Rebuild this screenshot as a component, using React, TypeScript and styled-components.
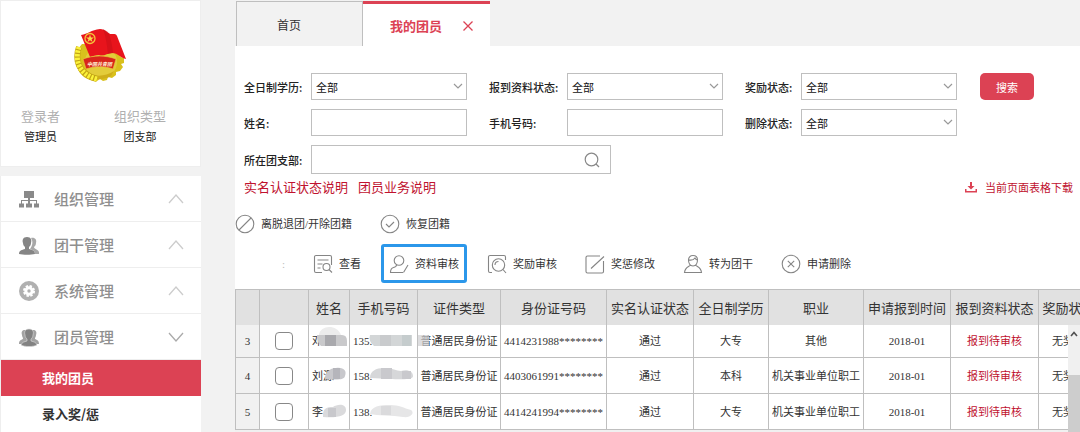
import React from "react";
import styled, { createGlobalStyle, css } from "styled-components";

const RED = "#dc4254";
const CRIMSON = "#c0122f";
const LINE = "#bfbfbf";

const GlobalStyle = createGlobalStyle`
  * { box-sizing: border-box; }
  body {
    margin: 0;
    background: #f2f2f2;
    color: #333;
    font: 11px/16px "Noto Sans CJK SC", sans-serif;
  }
  button, input, select { font: inherit; color: inherit; }
  a { color: inherit; text-decoration: none; }
  svg { display: block; flex: none; }
`;

const Page = styled.div`
  display: flex;
  gap: 34px;
  height: 100vh;
  overflow: hidden;
`;

/* Sidebar */
const Sidebar = styled.aside`
  flex: none;
  width: 201px;
  display: flex;
  flex-direction: column;
  gap: 9px;
`;

const Profile = styled.section`
  display: flex;
  flex-direction: column;
  align-items: center;
  height: 167px;
  padding-top: 27px;
  background: #fff;
  border: 1px solid #eee;
`;

const ProfileFacts = styled.dl`
  display: flex;
  align-self: stretch;
  justify-content: space-between;
  margin: 22px 0 0;
  padding: 0 34px 0 20px;
  text-align: center;
`;

const FactName = styled.dt`
  color: #b0b0b0;
  font-size: 13px;
  line-height: 20px;
`;

const FactValue = styled.dd`
  margin: 0;
  line-height: 20px;
  color: #222;
`;

const Menu = styled.nav`
  background: #fff;
  border-left: 1px solid #eee;
`;

const MenuGroup = styled.button`
  display: flex;
  align-items: center;
  width: 100%;
  height: 46px;
  padding: 0 17px 0 18px;
  border: 0;
  border-bottom: 1px solid #eee;
  background: none;
  color: #8f8f8f;
  font-size: 15px;
  font-weight: 500;
  line-height: 22px;
  text-align: left;
`;

const MenuTitle = styled.span`
  flex: 1;
  padding-left: 15px;
`;

const MenuLink = styled.a<{ $active?: boolean }>`
  display: flex;
  align-items: center;
  height: 36px;
  padding-left: 41px;
  font-size: 13px;
  font-weight: 700;
  color: ${(p) => (p.$active ? "#fff" : "#333")};
  background: ${(p) => (p.$active ? RED : "#fff")};
`;

/* Main column */
const Main = styled.main`
  flex: 1;
  min-width: 0;
  display: flex;
  flex-direction: column;
  background: #fff;
`;

const Tabs = styled.div`
  display: flex;
  height: 46px;
  padding: 1px 0 0 1px;
  background: #f2f2f2;
`;

const Tab = styled.div<{ $active?: boolean }>`
  display: flex;
  align-items: center;
  width: 127px;
  padding: 2px 0 0 40px;
  border: 1px solid ${LINE};
  border-bottom: 0;
  ${(p) =>
    p.$active &&
    css`
      border: 0;
      border-top: 3px solid ${RED};
      background: #fff;
      justify-content: space-between;
      padding: 2px 16px 0 27px;
    `}
`;

const TabButton = styled.button<{ $active?: boolean }>`
  padding: 0;
  border: 0;
  background: none;
  line-height: 20px;
  font-size: ${(p) => (p.$active ? 13 : 12)}px;
  font-weight: ${(p) => (p.$active ? 700 : 400)};
  color: ${(p) => (p.$active ? RED : "#333")};
`;

const IconButton = styled.button`
  display: flex;
  padding: 0;
  border: 0;
  background: none;
`;

const Filters = styled.form`
  display: grid;
  grid-template-columns: 67px 156px 100px 156px 78px 156px 77px;
  row-gap: 9px;
  align-items: center;
  padding: 27px 0 0 9px;
`;

const Label = styled.label`
  font-weight: 500;
  color: #222;
  white-space: nowrap;
`;

const SpacedLabel = styled(Label)`
  padding-left: 22px;
`;

const fieldBox = css`
  width: 100%;
  height: 27px;
  padding: 0 5px;
  border: 1px solid ${LINE};
  border-radius: 0;
  background: #fff;
  color: #111;
`;

const TextField = styled.input`
  ${fieldBox}
`;

const SelectWrap = styled.div`
  position: relative;
  > svg {
    position: absolute;
    right: 4px;
    top: 10px;
    pointer-events: none;
  }
`;

const SelectField = styled.select`
  ${fieldBox}
  appearance: none;
  display: block;
  padding: 0 4px;
`;

const SearchButton = styled.button`
  height: 27px;
  margin-left: 23px;
  border: 0;
  border-radius: 5px;
  background: ${RED};
  color: #fff;
`;

const BranchBox = styled.div`
  grid-column: 2 / span 3;
  display: flex;
  align-items: center;
  width: 300px;
  height: 29px;
  padding-right: 10px;
  border: 1px solid ${LINE};
`;

const BranchInput = styled.input`
  flex: 1;
  min-width: 0;
  height: 100%;
  border: 0;
`;

const LinkRow = styled.div`
  display: flex;
  align-items: center;
  gap: 10px;
  height: 26px;
  padding: 0 7px 0 9px;
  color: ${CRIMSON};
`;

const HelpLink = styled.a`
  font-size: 13px;
  line-height: 20px;
`;

const DownloadLink = styled.a`
  display: flex;
  align-items: center;
  gap: 8px;
  margin-left: auto;
`;

const Toolbar = styled.div`
  display: flex;
  align-items: center;
  gap: 28px;
  height: 40px;
  margin-top: 4px;
  font-family: "Liberation Serif", "Noto Sans CJK SC", serif;
`;

const ActionBar = styled(Toolbar)`
  height: 39px;
  margin: 0 0 6px;
`;

const Colon = styled.span`
  width: 50px;
  text-align: right;
  color: #bbb;
`;

const Action = styled.button<{ $focused?: boolean }>`
  display: flex;
  align-items: center;
  gap: 6px;
  height: 100%;
  padding: 0;
  border: 0;
  background: none;
  white-space: nowrap;
  ${(p) =>
    p.$focused &&
    css`
      margin: 0 -8px;
      padding: 0 5px;
      border: 3px solid #2b97ea;
      border-radius: 3px;
    `}
`;

/* Table */
const TableArea = styled.div`
  position: relative;
  flex: 1;
  min-height: 0;
  overflow: hidden;
  background: #f0f0f0;
`;

const Table = styled.table`
  table-layout: fixed;
  width: 864px;
  border-collapse: separate;
  border-spacing: 0;
  border-left: 1px solid ${LINE};
`;

const Th = styled.th`
  height: 36px;
  padding: 0;
  border: 1px solid ${LINE};
  border-width: 1px 1px 0 0;
  background: #e1e1e1;
  font-size: 13px;
  font-weight: 400;
  white-space: nowrap;
`;

const Tr = styled.tr<{ $first: boolean }>`
  height: ${(p) => (p.$first ? 33 : 36)}px;
`;

const Td = styled.td<{ $left?: boolean; $tone?: string }>`
  position: relative;
  padding: 0 ${(p) => (p.$left ? 3 : 0)}px;
  border: 1px solid ${LINE};
  border-width: 0 1px 1px 0;
  background: #fff;
  color: ${(p) => p.$tone || "#333"};
  font-family: "Liberation Serif", "Noto Sans CJK SC", serif;
  text-align: ${(p) => (p.$left ? "left" : "center")};
  white-space: nowrap;
`;

const IndexTd = styled(Td)`
  background: #f1f1f1;
`;

const RowCheck = styled.input`
  appearance: none;
  display: block;
  width: 18px;
  height: 18px;
  margin: 0 auto;
  border: 1px solid #888;
  border-radius: 4px;
  background: #fff;
`;

const Mask = styled.svg`
  position: absolute;
  left: 0;
  top: 0;
  z-index: 1;
  overflow: visible;
`;

const ScrollTrack = styled.div`
  position: absolute;
  z-index: 2;
  right: 0;
  top: 36px;
  bottom: 0;
  width: 12px;
  padding-top: 6px;
  display: flex;
  flex-direction: column;
  align-items: center;
  gap: 38px;
  background: #f0f0f0;
`;

const ScrollThumb = styled.div`
  flex: 1;
  width: 12px;
  background: #cdcdcd;
`;

const Chevron = ({ down = false }: { down?: boolean }) => (
  <svg width="16" height="10" viewBox="0 0 16 10" fill="none" stroke={down ? "#aaa" : "#ccc"} strokeWidth="1.3">
    <path d={down ? "M1 1l7 8 7-8" : "M1 9l7-8 7 8"} />
  </svg>
);

const Emblem = () => (
  <svg width="54" height="56" viewBox="0 0 54 56" role="img" aria-label="团徽">
    <path
      d="M8 16C2 22 0 31 3 39c3 9 11 14 20 14l3-2 3 2 4-1 1-3 4 1 4-3v-3l4-1 3-4-2-3 3-1V30l-3-1-5-12z"
      fill="#d9c01c"
    />
    <circle cx="27" cy="34" r="16" fill="#e3cc3a" />
    <path d="M13 44c7 5 18 5 27-1l-3 5c-7 4-15 4-21 1z" fill="#cfae1a" />
    <path d="M5 19C1 30 3 46 23 51" fill="none" stroke="#c2a314" strokeWidth="6" />
    <path d="M5 19C1 30 3 46 23 51" fill="none" stroke="#fbf23a" strokeWidth="5" strokeDasharray="2.400 1.200" />
    <path d="M7 7c7-1 10-5 19-6 6 0 8 6 13 5 2 0 3 0 4 2l9 23c-5-1-8-6-14-6-5 0-8 4-13 2-3 0-6 1-9 2z" fill="#e8141c" />
    <path d="M29 1c3 8 4 16 5 25l5-1C38 17 37 10 34 4z" fill="#c50d16" opacity=".5" />
    <path d="M9 31c11-4 22-4 33 0l-3 10c-8-3-18-3-27 0z" fill="#d8261c" stroke="#e9cf3f" strokeWidth=".6" />
    <text
      x="25.500"
      y="37.500"
      textAnchor="middle"
      fontSize="5"
      fontWeight="700"
      fontStyle="italic"
      fill="#fff3d8"
      fontFamily="Noto Sans CJK SC, sans-serif"
    >
      中国共青团
    </text>
    <circle cx="16" cy="10.500" r="5" fill="none" stroke="#f5c53a" strokeWidth="1.300" />
    <path d="M16 6.500l1 2.900h3l-2.400 1.800.9 2.900-2.500-1.800-2.500 1.800.9-2.900-2.400-1.800h3z" fill="#f8d64a" />
  </svg>
);

const OrgIcon = () => (
  <svg width="20" height="20" viewBox="0 0 20 20" fill="#8a8a8a">
    <path d="M5 2h10v7h-4v2h7v4h-1v-3h-6v3H9v-3H3v3H2v-4h7V9H5z" />
    <path d="M0 14.500h5v4H0zM7 14.500h6v4H7zM15 14.500h5v4h-5z" />
  </svg>
);

const PairIcon = () => (
  <svg width="20" height="20" viewBox="0 0 20 20">
    <path d="M12 3c4-1 6 2 5 5 0 2-1 3-2 4 0 2 4 2 5 5v2h-4c0-4-3-4-5-5 3-4 3-8 1-11z" fill="#a8a8a8" />
    <path d="M8 2c4 0 5 3 4 6 0 2-1 3-2 4v2c3 1 6 1 6 5-4 1-12 1-16 0 0-4 3-4 6-5v-2C5 11 4 10 4 8 3 5 4 2 8 2z" fill="#858585" />
  </svg>
);

const GearIcon = () => (
  <svg width="20" height="20" viewBox="0 0 20 20">
    <circle cx="10" cy="10" r="10" fill="#b0b0b0" />
    <circle cx="10" cy="10" r="5" fill="none" stroke="#fff" strokeWidth="2" strokeDasharray="2.400 1.527" />
    <circle cx="10" cy="10" r="3.200" fill="none" stroke="#fff" strokeWidth="3" />
  </svg>
);

const TrioIcon = () => (
  <svg width="20" height="20" viewBox="0 0 20 20">
    <path
      d="M6 3c-3 0-4 2-3 5 0 2 1 2 1 4-2 1-4 1-4 5h20c0-4-2-4-4-5 0-2 1-2 1-4 1-3 0-5-3-5z"
      fill="#a2a2a2"
    />
    <path
      d="M10 2c4 0 5 3 4 6 0 2-1 3-2 4v2c3 1 5 1 6 4-4 2-12 2-16 0 1-3 3-3 6-4v-2c-1-1-2-2-2-4-1-3 0-6 4-6z"
      fill="#828282"
      stroke="#ddd"
      strokeWidth=".6"
    />
  </svg>
);

const Glyph = ({ children }: { children: React.ReactNode }) => (
  <svg width="20" height="20" viewBox="0 0 20 20" fill="none" stroke="#858585" strokeWidth="1.100">
    {children}
  </svg>
);

const glyphs = {
  ban: (
    <>
      <circle cx="10" cy="10" r="8.800" />
      <path d="M4 16L16 4" />
    </>
  ),
  check: (
    <>
      <circle cx="10" cy="10" r="8.800" />
      <path d="M6 10l3 3 5-5" />
    </>
  ),
  view: (
    <>
      <path d="M9 18.500H3A1.500 1.500 0 0 1 1.500 17V3A1.500 1.500 0 0 1 3 1.500h14A1.500 1.500 0 0 1 18.500 3v8M4.500 6h11M4.500 10h5M4.500 14h3" />
      <circle cx="13.500" cy="13" r="3.500" />
      <path d="M16 15.500l3 3" />
    </>
  ),
  review: (
    <>
      <circle cx="10" cy="6.500" r="4.800" />
      <path d="M7.500 11c0 1.500-1 2-3 2.500-2 .5-3 2-3 5H14M19 11l-4.500 7.500" />
    </>
  ),
  award: (
    <>
      <path d="M5 18.500H3A1.500 1.500 0 0 1 1.500 17V3A1.500 1.500 0 0 1 3 1.500h14A1.500 1.500 0 0 1 18.500 3v3" />
      <circle cx="11.500" cy="11" r="6.200" />
      <path d="M8 11a3.500 3.500 0 0 1 3.500-3.500M16 15.500l3 3.500" />
    </>
  ),
  edit: <path d="M15 2H2.500A1.500 1.500 0 0 0 1 3.500v14A1.500 1.500 0 0 0 2.500 19H17a1.500 1.500 0 0 0 1.500-1.500V7M6 14.500L19 2.500" />,
  person: (
    <>
      <path d="M10 1.500c3 0 4.500 2 4.500 4.500 0 3-1.500 6-4.500 6S5.500 9 5.500 6c0-2.500 1.500-4.500 4.500-4.500zM6 6c3 .5 5-.5 6-2 .5 1 1.500 2 2.500 2M7.500 11C6 13 2 13 1.500 18.500h17C18 13 14 13 12.500 11" />
    </>
  ),
  remove: (
    <>
      <circle cx="10" cy="10" r="8.800" />
      <path d="M6.800 6.800l6.400 6.400M13.200 6.800l-6.400 6.400" />
    </>
  ),
};

type GlyphName = keyof typeof glyphs;

const ActionItem = ({ icon, text, focused }: { icon: GlyphName; text: string; focused?: boolean }) => (
  <Action type="button" $focused={focused}>
    <Glyph>{glyphs[icon]}</Glyph>
    {text}
  </Action>
);

const Dropdown = ({ id }: { id: string }) => (
  <SelectWrap>
    <SelectField id={id} defaultValue="all">
      <option value="all">全部</option>
    </SelectField>
    <svg width="10" height="7" viewBox="0 0 10 7" fill="none" stroke="#999" strokeWidth="1.200">
      <path d="M1 1l4 4 4-4" />
    </svg>
  </SelectWrap>
);

const menu = [
  { title: "组织管理", icon: <OrgIcon /> },
  { title: "团干管理", icon: <PairIcon /> },
  { title: "系统管理", icon: <GearIcon /> },
  { title: "团员管理", icon: <TrioIcon />, open: true },
];

const columns = [
  { title: "", width: 24 },
  { title: "", width: 49 },
  { title: "姓名", width: 41 },
  { title: "手机号码", width: 68 },
  { title: "证件类型", width: 83 },
  { title: "身份证号码", width: 106 },
  { title: "实名认证状态", width: 87 },
  { title: "全日制学历", width: 75 },
  { title: "职业", width: 95 },
  { title: "申请报到时间", width: 87 },
  { title: "报到资料状态", width: 88 },
  { title: "奖励状态", width: 60 },
];

const members = [
  {
    no: 3,
    name: "邓",
    phone: "135.",
    idNo: "4414231988********",
    degree: "大专",
    job: "其他",
    nameMask: (
      <>
        <path d="M10 10c1-10 18-11 22 0v4H10z" fill="#ececec" />
        <path d="M8 10h25q5 0 5 6v5H12q-4-3-4-11z" fill="#c9c9cb" />
        <path d="M16 10h11v11H16z" fill="#a9a9ad" />
      </>
    ),
    phoneMask: (
      <>
        <path d="M20 10h42v11H24q-6-5-4-11z" fill="#d3d6d7" />
        <path d="M30 10h11v11H30z" fill="#c9cbcd" />
        <path d="M52 10h9v11h-9z" fill="#c5cccd" />
        <path d="M68 10h11v11H68z" fill="#cfcfd1" opacity=".7" />
      </>
    ),
  },
  {
    no: 4,
    name: "刘源",
    phone: "158.",
    idNo: "4403061991********",
    degree: "本科",
    job: "机关事业单位职工",
    nameMask: (
      <>
        <path d="M16 21c0-7 5-11 11-11 8-1 11 3 9 8-1 4-7 4-20 3z" fill="#c8c8cc" />
        <path d="M24 10h7v11h-7z" fill="#b5b5bb" />
      </>
    ),
    phoneMask: (
      <>
        <path d="M20 20c0-7 6-10 14-10 9 0 12 3 17 3 6-2 12 0 12 5 0 4-8 4-43 2z" fill="#d6d7d9" />
        <path d="M31 10h11v11H31zM52 13h9v8h-9z" fill="#c9c9cd" />
      </>
    ),
  },
  {
    no: 5,
    name: "李",
    phone: "138.",
    idNo: "4414241994********",
    degree: "大专",
    job: "机关事业单位职工",
    nameMask: (
      <>
        <path d="M14 21c0-7 4-8 10-8 4-3 13-4 13 3 0 6-8 8-23 7z" fill="#dadadc" />
        <path d="M19 14h8v9h-8z" fill="#c8c8cc" />
      </>
    ),
    phoneMask: (
      <>
        <path d="M20 20c1-8 10-9 20-9 9 0 14 3 21 5 4 3 0 8-8 7-10-2-26-1-33-3z" fill="#e6e6e7" />
        <path d="M31 12h10v9H31z" fill="#dadadc" />
      </>
    ),
  },
];

export default function App() {
  return (
    <>
      <GlobalStyle />
      <Page>
        <Sidebar>
          <Profile>
            <Emblem />
            <ProfileFacts>
              <div>
                <FactName>登录者</FactName>
                <FactValue>管理员</FactValue>
              </div>
              <div>
                <FactName>组织类型</FactName>
                <FactValue>团支部</FactValue>
              </div>
            </ProfileFacts>
          </Profile>
          <Menu>
            {menu.map((m) => (
              <MenuGroup key={m.title} type="button" aria-expanded={!!m.open}>
                {m.icon}
                <MenuTitle>{m.title}</MenuTitle>
                <Chevron down={m.open} />
              </MenuGroup>
            ))}
            <MenuLink href="#members" $active>
              我的团员
            </MenuLink>
            <MenuLink href="#awards">录入奖/惩</MenuLink>
          </Menu>
        </Sidebar>

        <Main>
          <Tabs>
            <Tab>
              <TabButton type="button">首页</TabButton>
            </Tab>
            <Tab $active>
              <TabButton type="button" $active>
                我的团员
              </TabButton>
              <IconButton type="button" aria-label="关闭">
                <svg width="12" height="12" viewBox="0 0 12 12" stroke={RED} strokeWidth="1.300">
                  <path d="M1.500 1.500l9 9M10.500 1.500l-9 9" />
                </svg>
              </IconButton>
            </Tab>
          </Tabs>

          <Filters>
            <Label htmlFor="degree">全日制学历:</Label>
            <Dropdown id="degree" />
            <SpacedLabel htmlFor="material">报到资料状态:</SpacedLabel>
            <Dropdown id="material" />
            <SpacedLabel htmlFor="award">奖励状态:</SpacedLabel>
            <Dropdown id="award" />
            <SearchButton type="button">搜索</SearchButton>

            <Label htmlFor="name">姓名:</Label>
            <TextField id="name" />
            <SpacedLabel htmlFor="phone">手机号码:</SpacedLabel>
            <TextField id="phone" />
            <SpacedLabel htmlFor="deleted">删除状态:</SpacedLabel>
            <Dropdown id="deleted" />
            <span />

            <Label htmlFor="branch">所在团支部:</Label>
            <BranchBox>
              <BranchInput id="branch" />
              <IconButton type="button" aria-label="查找">
                <svg width="16" height="16" viewBox="0 0 16 16" fill="none" stroke="#888" strokeWidth="1.200">
                  <circle cx="7.500" cy="7.500" r="6.300" />
                  <path d="M12 12l3 3" />
                </svg>
              </IconButton>
            </BranchBox>
          </Filters>

          <LinkRow>
            <HelpLink href="#status-help">实名认证状态说明</HelpLink>
            <HelpLink href="#business-help">团员业务说明</HelpLink>
            <DownloadLink href="#download">
              <svg width="12" height="12" viewBox="0 0 12 12" fill={RED}>
                <path d="M5 1h2v4h2.500L6 8.500 2.500 5H5zM0 8h1.500v2h9V8H12v3.500H0z" />
              </svg>
              当前页面表格下载
            </DownloadLink>
          </LinkRow>

          <Toolbar>
            <ActionItem icon="ban" text="离脱退团/开除团籍" />
            <ActionItem icon="check" text="恢复团籍" />
          </Toolbar>
          <ActionBar>
            <Colon>:</Colon>
            <ActionItem icon="view" text="查看" />
            <ActionItem icon="review" text="资料审核" focused />
            <ActionItem icon="award" text="奖励审核" />
            <ActionItem icon="edit" text="奖惩修改" />
            <ActionItem icon="person" text="转为团干" />
            <ActionItem icon="remove" text="申请删除" />
          </ActionBar>

          <TableArea>
            <Table>
              <colgroup>
                {columns.map((c, i) => (
                  <col key={i} width={c.width} />
                ))}
              </colgroup>
              <thead>
                <tr>
                  {columns.map((c, i) => (
                    <Th key={i} scope="col">
                      {c.title}
                    </Th>
                  ))}
                </tr>
              </thead>
              <tbody>
                {members.map((m, i) => (
                  <Tr key={m.no} $first={i === 0}>
                    <IndexTd>{m.no}</IndexTd>
                    <Td>
                      <RowCheck type="checkbox" aria-label={`选择第${m.no}行`} />
                    </Td>
                    <Td $left>
                      {m.name}
                      <Mask width="40" height="30" aria-hidden="true">
                        {m.nameMask}
                      </Mask>
                    </Td>
                    <Td $left>
                      {m.phone}
                      <Mask width="68" height="30" aria-hidden="true">
                        {m.phoneMask}
                      </Mask>
                    </Td>
                    <Td>普通居民身份证</Td>
                    <Td>{m.idNo}</Td>
                    <Td>通过</Td>
                    <Td>{m.degree}</Td>
                    <Td>{m.job}</Td>
                    <Td>2018-01</Td>
                    <Td $tone={CRIMSON}>报到待审核</Td>
                    <Td>无奖励</Td>
                  </Tr>
                ))}
              </tbody>
            </Table>
            <ScrollTrack aria-hidden="true">
              <svg width="8" height="6" viewBox="0 0 8 6" fill="none" stroke="#505050" strokeWidth="1.600">
                <path d="M1 5l3-3.500L7 5" />
              </svg>
              <ScrollThumb />
            </ScrollTrack>
          </TableArea>
        </Main>
      </Page>
    </>
  );
}
